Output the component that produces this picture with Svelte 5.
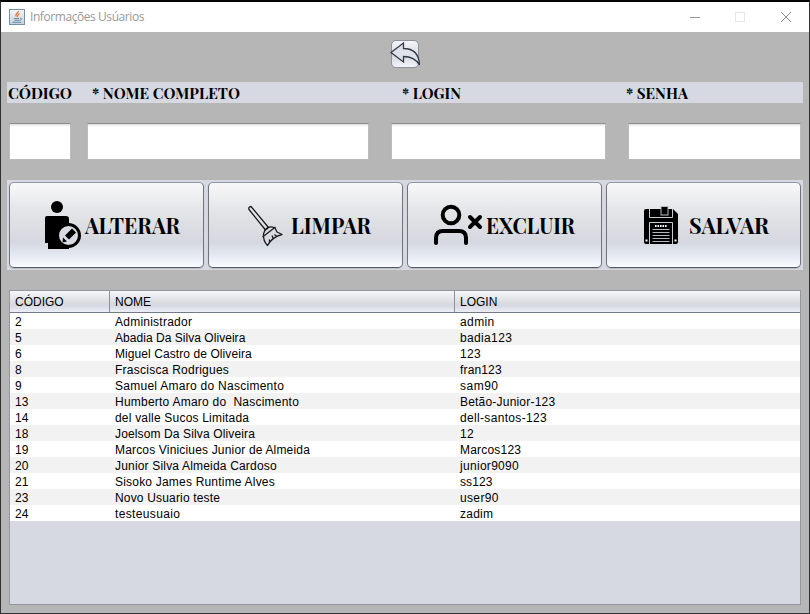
<script>
  const labels = [
    { text: 'CÓDIGO', width: 64, cell: 84 },
    { text: '* NOME COMPLETO', width: 148, cell: 310 },
    { text: '* LOGIN', width: 59, cell: 224 },
    { text: '* SENHA', width: 62, cell: 100 }
  ];
  const fields = [
    { name: 'codigo', width: 62, gap: 0 },
    { name: 'nome', width: 282, gap: 16 },
    { name: 'login', width: 215, gap: 22 },
    { name: 'senha', width: 173, gap: 22 }
  ];
  const buttons = [
    { id: 'edit', text: 'ALTERAR', x: 76, width: 95 },
    { id: 'broom', text: 'LIMPAR', x: 83, width: 80 },
    { id: 'remove', text: 'EXCLUIR', x: 79, width: 89 },
    { id: 'save', text: 'SALVAR', x: 83, width: 80 }
  ];
  // code, name, login, tracking of the name, tracking of the login
  const rows = [
    ['2', 'Administrador', 'admin', 0.24, 0.4],
    ['5', 'Abadia Da Silva Oliveira', 'badia123', 0.04, 0.35],
    ['6', 'Miguel Castro de Oliveira', '123', 0.08, 0.3],
    ['8', 'Frascisca Rodrigues', 'fran123', 0.25, 0.15],
    ['9', 'Samuel Amaro do Nascimento', 'sam90', 0.27, 0.5],
    ['13', 'Humberto Amaro do  Nascimento', 'Betão-Junior-123', 0.23, 0.2],
    ['14', 'del valle Sucos Limitada', 'dell-santos-123', 0.2, 0.33],
    ['18', 'Joelsom Da Silva Oliveira', '12', 0.13, 0.3],
    ['19', 'Marcos Viniciues Junior de Almeida', 'Marcos123', 0.17, 0.2],
    ['20', 'Junior Silva Almeida Cardoso', 'junior9090', 0.18, 0.3],
    ['21', 'Sisoko James Runtime Alves', 'ss123', 0.2, 0.1],
    ['23', 'Novo Usuario teste', 'user90', 0.17, 0.35],
    ['24', 'testeusuaio', 'zadim', 0.36, 0.25]
  ];
</script>

<div class="window">
  <header class="titlebar">
    <svg class="java" width="16" height="16" viewBox="0 0 16 16">
      <defs>
        <linearGradient id="jg" x1="0" y1="0" x2="0" y2="1">
          <stop offset="0" stop-color="#f4f6f8" /><stop offset="1" stop-color="#c3d2de" />
        </linearGradient>
      </defs>
      <rect x=".5" y=".5" width="15" height="15" fill="url(#jg)" stroke="#7890a5" />
      <path d="M9.500 2C10 4 5.500 4.500 7.300 7.500M10.500 4.500C8 5.500 9.500 6.500 8.300 8" fill="none" stroke="#e8762c" stroke-width="1.200" />
      <path d="M5 9.500h5M5.500 11.300h4.500M3.500 13.300h8.500M11 9.300c2.500-.5 1.500 2-.5 2.200" fill="none" stroke="#5b7d99" stroke-width=".9" />
    </svg>
    <span class="title">Informações Usúarios</span>
    <svg class="controls" width="104" height="14" viewBox="0 0 104 14" fill="none">
      <path d="M0 7.500h10" stroke="#999" />
      <rect x="45.500" y="2.500" width="9" height="9" stroke="#e6e6e6" />
      <path d="M91 2l10 10M101 2l-10 10" stroke="#8c8c8c" stroke-width="1" />
    </svg>
  </header>

  <main>
    <button class="back" aria-label="Voltar">
      <svg width="32" height="30" viewBox="0 0 32 30">
        <path d="M2 13.500L14.500 4v5.500C23 9.500 30 14 30.500 26C27 20 22 17.500 14.500 17.500V23Z" fill="#dfe2e9" stroke="#343a49" stroke-width="1.300" />
      </svg>
    </button>

    <div class="labels">
      {#each labels as l}
        <div class="label" style:width="{l.cell}px">
          <svg width={l.width + 4} height="21"><text x="0" y="17" textLength={l.width} lengthAdjust="spacingAndGlyphs">{l.text}</text></svg>
        </div>
      {/each}
    </div>

    <div class="fields">
      {#each fields as f}
        <input aria-label={f.name} style:width="{f.width}px" style:margin-left="{f.gap}px" />
      {/each}
    </div>

    <div class="actions">
      {#each buttons as b}
        <button class="action">
          <svg width="193" height="84" viewBox="1 1 193 84">
            {#if b.id === 'edit'}
              <circle cx="48" cy="25" r="6" />
              <path d="M38 34h19q3 0 3 3v30H39v-6h-3V36q0-2 2-2z" />
              <circle cx="59.500" cy="53.500" r="11" fill="#d9dbe2" stroke="#000" stroke-width="3" />
              <path d="M56 53.500l7-7 4 4-7 7zM54 55.500l4 4-4.500 1z" />
            {:else if b.id === 'broom'}
              <g fill="none" stroke="#1b1b1f" stroke-width="1.300" stroke-linejoin="round">
                <path d="M41 27.500Q40 25 43 24.500L60.500 45.500L57.500 48Z" />
                <path d="M57 48Q61 43 67 46L69 50L74 52.500Q64 55 59.500 63.500Q55 59 55.500 52Z" />
                <path d="M54.500 55L67.500 45M61.500 60.500v-3M65.500 57l-1.500-3.500M69 54.500l-2.500-2" />
              </g>
            {:else if b.id === 'remove'}
              <g fill="none" stroke="#000" stroke-width="4" stroke-linecap="round">
                <circle cx="44" cy="33" r="8.300" />
                <path d="M29 61v-5q0-7 7-7h16q7 0 7 7v5" />
                <path d="M63 35l10 10M73 35l-10 10" />
              </g>
            {:else}
              <path d="M40 27h27l5 5v28q0 2-2 2H40q-2 0-2-2V29q0-2 2-2z" />
              <path d="M43.500 27v8.500h23V27M43.500 62V40.500h23V62" fill="none" stroke="#c9ccd3" stroke-width="1" />
              <rect x="55" y="24.500" width="7" height="8.500" stroke="#b9bcc3" stroke-width="1" />
              <path d="M49 44h12" stroke="#fff" stroke-width="2" stroke-dasharray="1.600 .9" />
              <path d="M46.500 47.500h17M46.500 50.500h17M46.500 53.500h17M46.500 56.500h17M46.500 59.500h17" stroke="#b4b7bf" stroke-width="1" />
              <path d="M39.500 57.500h2v2h-2zM68.500 57.500h2v2h-2z" fill="#fff" />
            {/if}
            <text x={b.x} y="52" textLength={b.width} lengthAdjust="spacingAndGlyphs">{b.text}</text>
          </svg>
        </button>
      {/each}
    </div>

    <div class="table">
      <div class="row head"><span>CÓDIGO</span><span>NOME</span><span>LOGIN</span></div>
      {#each rows as [code, name, login, nameTracking, loginTracking]}
        <div class="row">
          <span>{code}</span>
          <span style:letter-spacing="{nameTracking}px">{name}</span>
          <span style:letter-spacing="{loginTracking}px">{login}</span>
        </div>
      {/each}
    </div>
  </main>
</div>

<style>
  .window {
    box-sizing: border-box;
    width: 810px;
    height: 614px;
    border: 1px solid #2e3032;
    border-top: 2px solid #050505;
    background: #b6b6b6;
    font-family: "Liberation Sans", Arial, sans-serif;
    overflow: hidden;
  }
  .titlebar {
    box-sizing: border-box;
    height: 30px;
    display: flex;
    align-items: center;
    padding: 0 15px 0 8px;
    background: #fff;
  }
  .java { margin-bottom: 1px; }
  .title {
    margin-left: 5px;
    font: 12px/16px "Open Sans", "Noto Sans", sans-serif;
    letter-spacing: -0.43px;
    color: #999;
  }
  .controls { margin-left: auto; }
  main {
    display: flex;
    flex-direction: column;
    padding: 8px 6px 0;
  }
  .back {
    align-self: center;
    box-sizing: border-box;
    width: 28px;
    height: 28px;
    padding: 0;
    border: 1px solid #8d9199;
    border-radius: 5px;
    background: linear-gradient(#f5f5f8, #d6d9e0 60%, #f4f6fb);
    display: flex;
    align-items: center;
    justify-content: center;
  }
  .back svg { flex: none; }
  .labels {
    box-sizing: border-box;
    display: flex;
    height: 21px;
    margin-top: 14px;
    padding-left: 1px;
    width: 796px;
    background: #d6d9e1;
  }
  .labels svg, .action svg { display: block; overflow: visible; }
  text {
    font-family: "Playfair Display", "Liberation Serif", serif;
    font-weight: 700;
    fill: #000;
  }
  .labels text { font-size: 15.5px; }
  .action text { font-size: 22.5px; }
  .fields {
    display: flex;
    margin: 20px 0 0 2px;
  }
  input {
    box-sizing: border-box;
    flex: none;
    height: 37px;
    margin: 0;
    padding: 0 6px;
    border: 1px solid #bbb;
    border-top-color: #8c8c8c;
    border-radius: 0;
    background: linear-gradient(#dedede, #fff 3px);
  }
  .actions {
    display: flex;
    gap: 4px;
    box-sizing: border-box;
    width: 796px;
    height: 90px;
    margin-top: 20px;
    padding: 2px;
    background: #d6d9e1;
  }
  .action {
    box-sizing: border-box;
    flex: none;
    width: 195px;
    height: 86px;
    padding: 0;
    border: 1px solid #70747d;
    border-top-color: #92969e;
    border-bottom-color: #565a64;
    border-radius: 5px;
    background: linear-gradient(#f8f8f9 0%, #e3e4e7 35%, #d5d8df 70%, #e2e6ef 84%, #f9fbff 100%);
    box-shadow: 0 1px 1px #b8bbc5;
  }
  .table {
    box-sizing: border-box;
    width: 792px;
    height: 315px;
    margin: 20px 0 0 2px;
    border: 1px solid #9297a1;
    background: #d6d9e1;
    font-size: 12px;
    color: #000;
  }
  .row {
    display: grid;
    grid-template-columns: 100px 345px 1fr;
    height: 16px;
    line-height: 19px;
    background: #fff;
    white-space: pre;
  }
  .row:nth-child(odd) { background: #f2f2f2; }
  .row span { padding-left: 5px; }
  .row.head {
    box-sizing: border-box;
    height: 22px;
    line-height: 23px;
    border-bottom: 1px solid #747b88;
    background: linear-gradient(#f7f7f8, #d8dae0 60%, #d6d9e1 70%, #eceff7);
  }
  .head span { height: 21px; border-right: 1px solid #8c919b; }
  .head span:last-child { border: 0; }
</style>
